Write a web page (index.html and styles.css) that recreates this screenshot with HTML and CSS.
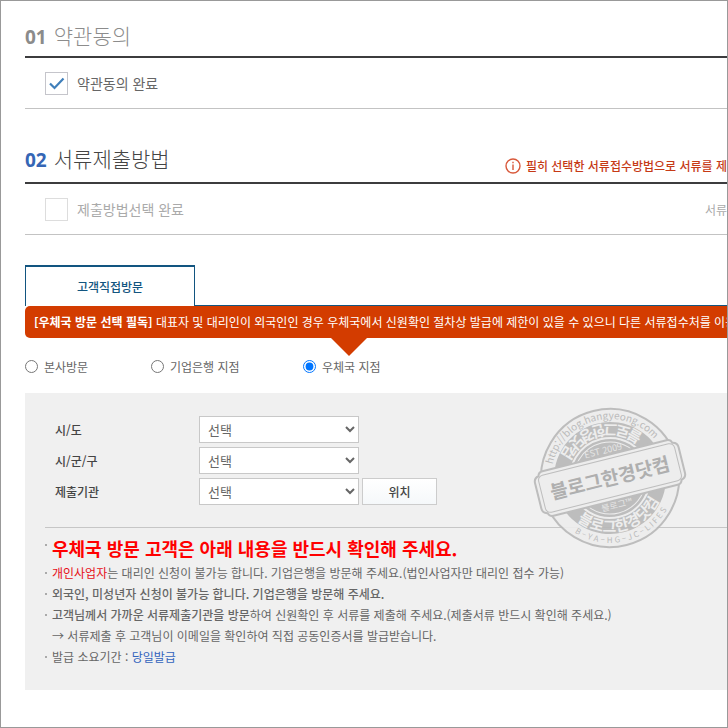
FILE: index.html
```html
<!DOCTYPE html>
<html lang="ko">
<head>
<meta charset="utf-8">
<meta name="viewport" content="width=device-width, initial-scale=1">
<title>서류제출방법</title>
<link rel="stylesheet" href="styles.css">
</head>
<body>
<main class="page">
  <section class="step step-done">
    <header class="step-head">
      <h2 class="step-title"><span class="step-no">01</span>약관동의</h2>
    </header>
    <div class="step-row">
      <label class="check"><input type="checkbox" checked>약관동의 완료</label>
    </div>
  </section>

  <section class="step step-current">
    <header class="step-head">
      <h2 class="step-title"><span class="step-no">02</span>서류제출방법</h2>
      <p class="notice">
        <svg class="notice-icon" viewBox="0 0 16 16" aria-hidden="true"><circle cx="8" cy="8" r="7"/><path d="M8 6.5V12M8 3.8V5.3"/></svg>
        <span>필히 선택한 서류접수방법으로 서류를 제</span>
      </p>
    </header>
    <div class="step-row">
      <label class="check"><input type="checkbox">제출방법선택 완료</label>
      <span class="row-note">서류</span>
    </div>
  </section>

  <section class="submit">
    <nav class="tabs"><button type="button" class="tab">고객직접방문</button></nav>
    <p class="alert"><b>[우체국 방문 선택 필독]</b> 대표자 및 대리인이 외국인인 경우 우체국에서 신원확인 절차상 발급에 제한이 있을 수 있으니 다른 서류접수처를 이용</p>
    <div class="places">
      <label><input type="radio" name="place">본사방문</label>
      <label><input type="radio" name="place">기업은행 지점</label>
      <label><input type="radio" name="place" checked>우체국 지점</label>
    </div>

    <div class="panel">
      <form class="fields">
        <label for="sido">시/도</label>
        <div class="field"><select id="sido"><option>선택</option></select></div>
        <label for="gungu">시/군/구</label>
        <div class="field"><select id="gungu"><option>선택</option></select></div>
        <label for="office">제출기관</label>
        <div class="field"><select id="office"><option>선택</option></select><button type="button" class="locate">위치</button></div>
      </form>
      <ul class="guide">
        <li class="guide-lead">우체국 방문 고객은 아래 내용을 반드시 확인해 주세요.</li>
        <li><span class="red">개인사업자</span>는 대리인 신청이 불가능 합니다. 기업은행을 방문해 주세요.(법인사업자만 대리인 접수 가능)</li>
        <li><b>외국인, 미성년자 신청이 불가능 합니다. 기업은행을 방문해 주세요.</b></li>
        <li><b>고객님께서 가까운 서류제출기관을 방문</b>하여 신원확인 후 서류를 제출해 주세요.(제출서류 반드시 확인해 주세요.)<br>→ 서류제출 후 고객님이 이메일을 확인하여 직접 공동인증서를 발급받습니다.</li>
        <li>발급 소요기간 : <span class="blue">당일발급</span></li>
      </ul>

      <svg class="stamp" viewBox="-80 -75 160 150" aria-hidden="true">
        <defs>
          <path id="arc-url" d="M-59 0A59 59 0 0 1 59 0"/>
          <path id="arc-name" d="M-54 0A54 54 0 0 0 54 0"/>
          <path id="arc-tail" d="M-65 0A65 65 0 0 0 65 0"/>
        </defs>
        <g transform="rotate(-14)">
          <circle class="stamp-paper" r="69"/>
          <circle class="stamp-band" r="56"/>
          <circle class="stamp-ring" r="40"/>
          <circle class="stamp-core" r="36"/>
          <text class="stamp-url"><textPath href="#arc-url" startOffset="50%">http://blog.hangyeong.com</textPath></text>
          <text class="stamp-arc" transform="rotate(180)"><textPath href="#arc-name" startOffset="50%">블로그한경닷컴</textPath></text>
          <text class="stamp-arc"><textPath href="#arc-name" startOffset="50%">블로그한경닷컴</textPath></text>
          <text class="stamp-tail"><textPath href="#arc-tail" startOffset="50%">B – Y A – H G – J C – L I F E S</textPath></text>
          <text class="stamp-small" y="-25">EST 2009</text>
          <text class="stamp-small" y="31">블로그™</text>
          <path class="stamp-paper" d="M-64-23H64Q68-23 69-19Q74-18 74-13V13Q74 18 69 19Q68 23 64 23H-64Q-68 23-69 19Q-74 18-74 13V-13Q-74-18-69-19Q-68-23-64-23Z"/>
          <rect class="stamp-label" x="-70" y="-19" width="140" height="38" rx="5"/>
          <text class="stamp-name" y="7">블로그한경닷컴</text>
        </g>
      </svg>
    </div>
  </section>
</main>
</body>
</html>
```
FILE: styles.css
```css
* { box-sizing: border-box; }
body {
  margin: 0;
  background: #fff;
  color: #666;
  font: 12px/21px "Noto Sans CJK KR", sans-serif;
}
h2, p, ul { margin: 0; padding: 0; }
button, select { font-family: inherit; }

.page {
  min-height: 100vh;
  padding-left: 24px;
  border: 1px solid #999;
  overflow: hidden;
}

.step-head {
  display: flex;
  align-items: flex-end;
  justify-content: space-between;
  height: 57px;
  border-bottom: 2px solid #3c3c3e;
}
.step-current .step-head { height: 75px; }
.step-title {
  display: flex;
  align-items: baseline;
  gap: 7px;
  padding-bottom: 3px;
  font-size: 21px;
  line-height: 32px;
  font-weight: 300;
  color: #8c8c8c;
}
.step-no { font: 700 19px/32px "Noto Sans", sans-serif; color: #8b8b8b; }
.step-current .step-title { padding-bottom: 6px; color: #444; }
.step-current .step-no { color: #3566b5; }

.notice {
  display: flex;
  align-items: center;
  gap: 5px;
  padding-bottom: 6px;
  white-space: nowrap;
  font-weight: 500;
  color: #c63a16;
}
.notice-icon { flex: none; width: 16px; height: 16px; fill: none; stroke: #d8583a; stroke-width: 1.4; }

.step-row {
  display: flex;
  align-items: center;
  justify-content: space-between;
  height: 51px;
  padding-left: 20px;
  border-bottom: 1px solid #c3c3c3;
}
.check { display: flex; align-items: center; gap: 9px; font-size: 14px; }
.check input {
  width: 23px;
  height: 23px;
  margin: 0;
  appearance: none;
  border: 1px solid #ddd;
  background: #fff;
}
.check input:checked {
  border-color: #c5c5cb;
  background: url("data:image/svg+xml,%3Csvg xmlns='http://www.w3.org/2000/svg' viewBox='0 0 21 21'%3E%3Cpath d='M4 10.5l4.5 4.5 9-9.5' fill='none' stroke='%233f7fba' stroke-width='2.2'/%3E%3C/svg%3E");
}
.step-current .step-row { color: #aaa; }
.row-note { white-space: nowrap; }

.tabs { display: flex; margin-top: 30px; border-bottom: 1px solid #125580; }
.tab {
  width: 170px;
  height: 41px;
  margin-bottom: -1px;
  border: 1px solid #125580;
  border-top-width: 2px;
  border-bottom: 0;
  background: #fff;
  color: #125580;
  font-size: 12px;
  font-weight: 500;
}

.alert {
  position: relative;
  height: 32px;
  padding-left: 9px;
  border-radius: 5px 0 0 5px;
  background: #d33c00;
  color: #fff;
  line-height: 32px;
  white-space: nowrap;
}
.alert b { font-weight: 700; }
.guide b { font-weight: 500; }
.alert::after {
  content: "";
  position: absolute;
  top: 100%;
  left: 306px;
  border: 18px solid transparent;
  border-top-color: #d33c00;
  border-bottom: 0;
}

.places { display: flex; height: 55px; padding-top: 2px; align-items: center; }
.places label { display: flex; align-items: center; gap: 6px; width: 126px; }
.places label:nth-child(2) { width: 152px; }
.places input { width: 13px; height: 13px; margin: 0; }

.panel {
  position: relative;
  padding: 23px 0 23px 20px;
  background: #f0f0f0;
}
.fields {
  display: grid;
  grid-template-columns: 144px 1fr;
  row-gap: 4px;
  align-items: center;
  padding: 0 0 22px 10px;
  border-bottom: 1px solid #c6c6c6;
  color: #444;
  font-weight: 500;
}
.field { display: flex; gap: 3px; }
.field select {
  width: 160px;
  height: 27px;
  padding-left: 4px;
  border: 1px solid #c8c8c8;
  border-radius: 0;
  background: #fff;
  color: #666;
  font-size: 13px;
}
.locate {
  width: 75px;
  height: 27px;
  padding: 0;
  border: 1px solid #ccc;
  background: linear-gradient(#fff, #f5f8fa);
  color: #444;
  font-size: 12px;
  font-weight: 500;
}

.guide { padding-top: 6px; list-style: none; }
.guide li { position: relative; padding-left: 7px; }
.guide li::before {
  content: "";
  position: absolute;
  top: 10px;
  left: 0;
  width: 2px;
  height: 2px;
  background: #aaa;
}
.guide .guide-lead { color: #f00; font-size: 18px; line-height: 28px; font-weight: 700; }
.red { color: #e60f17; }
.blue { color: #3263bd; }

.stamp { position: absolute; top: 10px; left: 505px; width: 160px; height: 150px; opacity: 0.9; }
.stamp text { text-anchor: middle; fill: #b5b5b5; }
.stamp-paper { fill: #ededed; stroke: #b8b8b8; stroke-width: 2; }
.stamp-band { fill: #b8b8b8; }
.stamp-ring { fill: #b8b8b8; stroke: #ededed; stroke-width: 2; }
.stamp-core { fill: #b8b8b8; stroke: #ededed; stroke-width: 1; }
.stamp-label { fill: none; stroke: #b8b8b8; stroke-width: 1; }
.stamp .stamp-url { font-size: 10px; }
.stamp .stamp-tail { font-size: 8px; }
.stamp .stamp-arc { font-size: 15px; font-weight: 700; fill: #ededed; }
.stamp .stamp-small { font-size: 9px; fill: #e5e5e5; }
.stamp .stamp-name { font-size: 19px; font-weight: 700; fill: #a8a8a8; }
```
